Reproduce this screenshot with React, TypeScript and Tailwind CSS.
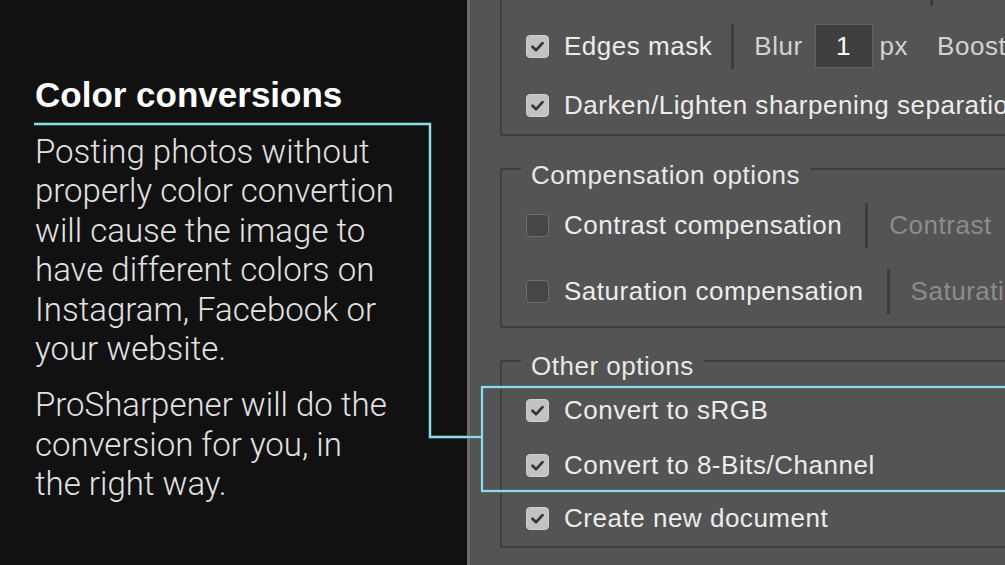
import React from 'react';

const Check: React.FC<{ checked?: boolean }> = ({ checked = false }) => {
    if (!checked) {
        return <div className="w-[23px] h-[23px] shrink-0 rounded-[4px] bg-[#464646] border border-[#6e6e6e]" />;
    }
    return (
        <div className="w-[23px] h-[23px] shrink-0 rounded-[4px] bg-[#c2c2c2] border border-[#cfcfcf] flex items-center justify-center">
            <svg width="23" height="23" viewBox="0 0 23 23">
                <path d="M6 11.8 L10 15.5 L17 7.8" fill="none" stroke="#353535" strokeWidth="3" strokeLinecap="round" strokeLinejoin="round" />
            </svg>
        </div>
    );
};

const Sep: React.FC<{ className?: string }> = ({ className = '' }) => (
    <div className={`w-[3px] h-[45px] shrink-0 bg-[#3c3c3c] ${className}`} />
);

export default function App() {
    return (
        <div className="relative w-[1005px] h-[565px] overflow-hidden flex font-['Liberation_Sans',sans-serif]">
            {/* left caption */}
            <div className="w-[467px] shrink-0 h-full bg-[#111111] pl-[35px] pt-[75px]">
                <h1 className="text-[35px] leading-[40px] font-bold text-white">Color conversions</h1>
                <div className="mt-[17px] font-['Roboto',sans-serif] text-[33px] leading-[39.4px] font-light text-[#e2e2e2] whitespace-nowrap">
                    <p>
                        Posting photos without<br />
                        properly color convertion<br />
                        will cause the image to<br />
                        have different colors on<br />
                        Instagram, Facebook or<br />
                        your website.
                    </p>
                    <p className="mt-[17px]">
                        ProSharpener will do the<br />
                        conversion for you, in<br />
                        the right way.
                    </p>
                </div>
            </div>

            {/* dialog panel */}
            <div className="flex-1 h-full bg-[#545454] border-l-[3px] border-[#6b6b6b] pl-[30px] text-[26px] tracking-[0.02em] text-[#ececec] whitespace-nowrap">
                {/* sharpening group (top cut off) */}
                <div className="w-[620px] h-[136px] border-2 border-t-0 border-[#3f3f3f] pl-[24px]">
                    <div className="h-[6px] flex">
                        <div className="ml-[404px] w-[3px] bg-[#3c3c3c]" />
                    </div>
                    <div className="mt-[17px] h-[46px] flex items-center">
                        <Check checked />
                        <span className="ml-[15px]">Edges mask</span>
                        <Sep className="ml-[19px]" />
                        <span className="ml-[20px] text-[#d2d2d2]">Blur</span>
                        <div className="ml-[12px] w-[58px] h-[44px] bg-[#3f3f3f] border border-[#646464] flex items-center justify-center text-white">1</div>
                        <span className="ml-[7px] text-[#d2d2d2]">px</span>
                        <span className="ml-[29px] text-[#d2d2d2]">Boost</span>
                    </div>
                    <div className="mt-[13px] h-[46px] flex items-center">
                        <Check checked />
                        <span className="ml-[15px]">Darken/Lighten sharpening separation</span>
                    </div>
                </div>

                {/* compensation group */}
                <div className="relative mt-[32px] w-[620px] border-2 border-[#3f3f3f] pl-[24px] pt-[32px] pb-[12px]">
                    <span className="absolute left-[19px] top-[-8px] px-[10px] leading-[26px] bg-[#545454] text-[#e8e8e8]">Compensation options</span>
                    <div className="h-[46px] flex items-center">
                        <Check />
                        <span className="ml-[15px]">Contrast compensation</span>
                        <Sep className="ml-[23px]" />
                        <span className="ml-[21px] text-[#8c8c8c]">Contrast</span>
                    </div>
                    <div className="mt-[20px] h-[46px] flex items-center">
                        <Check />
                        <span className="ml-[15px]">Saturation compensation</span>
                        <Sep className="ml-[23px]" />
                        <span className="ml-[21px] text-[#8c8c8c]">Saturation</span>
                    </div>
                </div>

                {/* other options group */}
                <div className="relative mt-[32px] w-[620px] border-2 border-[#3f3f3f] pl-[24px] pt-[28px] pb-[8px]">
                    <span className="absolute left-[19px] top-[-9px] px-[10px] leading-[26px] bg-[#545454] text-[#e8e8e8]">Other options</span>
                    <div className="h-[40px] flex items-center">
                        <Check checked />
                        <span className="ml-[15px]">Convert to sRGB</span>
                    </div>
                    <div className="mt-[15px] h-[40px] flex items-center">
                        <Check checked />
                        <span className="ml-[15px]">Convert to 8-Bits/Channel</span>
                    </div>
                    <div className="mt-[13px] h-[40px] flex items-center">
                        <Check checked />
                        <span className="ml-[15px]">Create new document</span>
                    </div>
                </div>
            </div>

            {/* annotation connector */}
            <svg className="absolute inset-0 pointer-events-none" width="1005" height="565" viewBox="0 0 1005 565">
                <g fill="none" stroke="#1e2a2c" strokeWidth="4" strokeOpacity="0.35">
                    <path d="M34 124 H430 V437 H482" />
                    <path d="M1010 387 H482 V491 H1010" />
                </g>
                <g fill="none" stroke="#86dfe8" strokeWidth="2.4">
                    <path d="M34 124 H430 V437 H482" />
                    <path d="M1010 387 H482 V491 H1010" />
                </g>
            </svg>
        </div>
    );
}
